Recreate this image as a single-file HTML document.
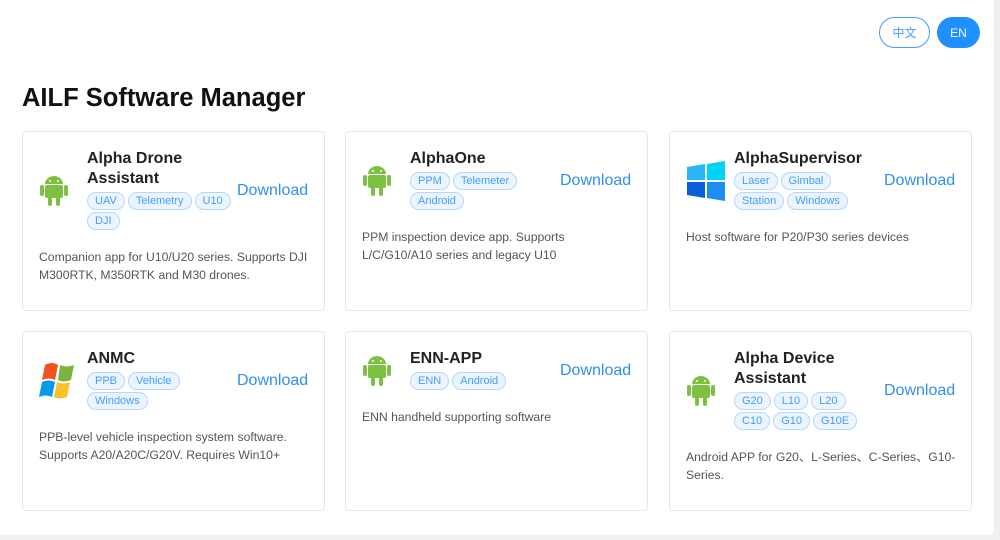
<!DOCTYPE html>
<html><head><meta charset="utf-8"><style>
*{box-sizing:border-box;margin:0;padding:0}
body{width:1000px;height:540px;background:#f0f0f0;font-family:"Liberation Sans","Noto Sans CJK SC",sans-serif;overflow:hidden;position:relative}
.page{position:absolute;left:0;top:0;width:994px;height:535px;background:#fff;border-radius:0 0 6px 0}
.lang{position:absolute;top:17px;height:31px;border-radius:16px;font-size:12px;display:flex;align-items:center;justify-content:center}
.zh{left:879px;width:51px;border:1px solid #409eff;color:#409eff;background:#fff}
.en{left:937px;width:43px;background:#1e90ff;color:#fff}
h1{position:absolute;left:22px;top:84px;font-size:25.5px;font-weight:bold;color:#111}
.card{position:absolute;width:303px;height:180px;border:1px solid #e4e7ed;border-radius:4px;padding:17px 16px;background:#fff}
.hd{display:flex;align-items:center}
.ic{width:48px;flex:none;display:flex;align-items:center}
.info{width:150px;flex:none}
.t{font-size:16px;font-weight:bold;color:#222;line-height:20px;margin-bottom:3px}
.tags{display:flex;gap:3px;margin-bottom:2px;white-space:nowrap}
.tag{height:18px;line-height:16px;border:1px solid #b3d8ff;background:#ecf5ff;color:#409eff;border-radius:9px;font-size:11px;padding:0 7px}
.dl{margin-left:auto;color:#2f8ff2;font-size:16px}
.d{margin-top:16px;font-size:12.2px;color:#555;line-height:18px;white-space:nowrap}
</style></head><body><div class="page">
<div class="lang zh">中文</div><div class="lang en">EN</div>
<h1>AILF Software Manager</h1>

<div class="card" style="left:22px;top:131px">
<div class="hd"><div class="ic"><svg width="30" height="34" viewBox="0 0 30 34"><g fill="#7cc142"><path d="M6 10a9 8 0 0 1 18 0z"/><rect x="6" y="11" width="18" height="13" rx="2"/><rect x="1" y="11" width="4" height="11" rx="2"/><rect x="25" y="11" width="4" height="11" rx="2"/><rect x="9" y="22" width="4" height="10" rx="2"/><rect x="17" y="22" width="4" height="10" rx="2"/></g><circle cx="11" cy="7" r="1" fill="#fff"/><circle cx="19" cy="7" r="1" fill="#fff"/></svg></div>
<div class="info"><div class="t">Alpha Drone<br>Assistant</div><div class="tags"><span class="tag">UAV</span><span class="tag">Telemetry</span><span class="tag">U10</span></div><div class="tags"><span class="tag">DJI</span></div></div>
<div class="dl">Download</div></div>
<div class="d">Companion app for U10/U20 series. Supports DJI<br>M300RTK, M350RTK and M30 drones.</div></div>

<div class="card" style="left:345px;top:131px">
<div class="hd"><div class="ic"><svg width="30" height="34" viewBox="0 0 30 34"><g fill="#7cc142"><path d="M6 10a9 8 0 0 1 18 0z"/><rect x="6" y="11" width="18" height="13" rx="2"/><rect x="1" y="11" width="4" height="11" rx="2"/><rect x="25" y="11" width="4" height="11" rx="2"/><rect x="9" y="22" width="4" height="10" rx="2"/><rect x="17" y="22" width="4" height="10" rx="2"/></g><circle cx="11" cy="7" r="1" fill="#fff"/><circle cx="19" cy="7" r="1" fill="#fff"/></svg></div>
<div class="info"><div class="t">AlphaOne</div><div class="tags"><span class="tag">PPM</span><span class="tag">Telemeter</span></div><div class="tags"><span class="tag">Android</span></div></div>
<div class="dl">Download</div></div>
<div class="d">PPM inspection device app. Supports<br>L/C/G10/A10 series and legacy U10</div></div>

<div class="card" style="left:669px;top:131px">
<div class="hd"><div class="ic"><svg width="40" height="40" viewBox="0 0 40 40"><path d="M1 6l18-3v16H1z" fill="#29b6f6"/><path d="M21 3l18-3v19H21z" fill="#00d4f5"/><path d="M1 21h18v16L1 34z" fill="#0a5fd8"/><path d="M21 21h18v19l-18-3z" fill="#1a8ff0"/></svg></div>
<div class="info"><div class="t">AlphaSupervisor</div><div class="tags"><span class="tag">Laser</span><span class="tag">Gimbal</span></div><div class="tags"><span class="tag">Station</span><span class="tag">Windows</span></div></div>
<div class="dl">Download</div></div>
<div class="d">Host software for P20/P30 series devices</div></div>

<div class="card" style="left:22px;top:331px">
<div class="hd"><div class="ic"><svg width="40" height="40" viewBox="0 0 40 40"><path d="M6 4q7-4 13 0l-3 15q-6-3-13 0z" fill="#f4511e"/><path d="M21 4q6 3 14 0l-3 15q-7 3-13 0z" fill="#7cb342"/><path d="M3 21q7-3 13 0l-3 15q-6-3-13 0z" fill="#039be5"/><path d="M18 21q6 3 13 0l-3 15q-7 3-13 0z" fill="#fbc02d"/></svg></div>
<div class="info"><div class="t">ANMC</div><div class="tags"><span class="tag">PPB</span><span class="tag">Vehicle</span></div><div class="tags"><span class="tag">Windows</span></div></div>
<div class="dl">Download</div></div>
<div class="d">PPB-level vehicle inspection system software.<br>Supports A20/A20C/G20V. Requires Win10+</div></div>

<div class="card" style="left:345px;top:331px">
<div class="hd"><div class="ic"><svg width="30" height="34" viewBox="0 0 30 34"><g fill="#7cc142"><path d="M6 10a9 8 0 0 1 18 0z"/><rect x="6" y="11" width="18" height="13" rx="2"/><rect x="1" y="11" width="4" height="11" rx="2"/><rect x="25" y="11" width="4" height="11" rx="2"/><rect x="9" y="22" width="4" height="10" rx="2"/><rect x="17" y="22" width="4" height="10" rx="2"/></g><circle cx="11" cy="7" r="1" fill="#fff"/><circle cx="19" cy="7" r="1" fill="#fff"/></svg></div>
<div class="info"><div class="t">ENN-APP</div><div class="tags"><span class="tag">ENN</span><span class="tag">Android</span></div></div>
<div class="dl">Download</div></div>
<div class="d">ENN handheld supporting software</div></div>

<div class="card" style="left:669px;top:331px">
<div class="hd"><div class="ic"><svg width="30" height="34" viewBox="0 0 30 34"><g fill="#7cc142"><path d="M6 10a9 8 0 0 1 18 0z"/><rect x="6" y="11" width="18" height="13" rx="2"/><rect x="1" y="11" width="4" height="11" rx="2"/><rect x="25" y="11" width="4" height="11" rx="2"/><rect x="9" y="22" width="4" height="10" rx="2"/><rect x="17" y="22" width="4" height="10" rx="2"/></g><circle cx="11" cy="7" r="1" fill="#fff"/><circle cx="19" cy="7" r="1" fill="#fff"/></svg></div>
<div class="info"><div class="t">Alpha Device<br>Assistant</div><div class="tags"><span class="tag">G20</span><span class="tag">L10</span><span class="tag">L20</span></div><div class="tags"><span class="tag">C10</span><span class="tag">G10</span><span class="tag">G10E</span></div></div>
<div class="dl">Download</div></div>
<div class="d">Android APP for G20、L-Series、C-Series、G10-<br>Series.</div></div>
</div></body></html>
